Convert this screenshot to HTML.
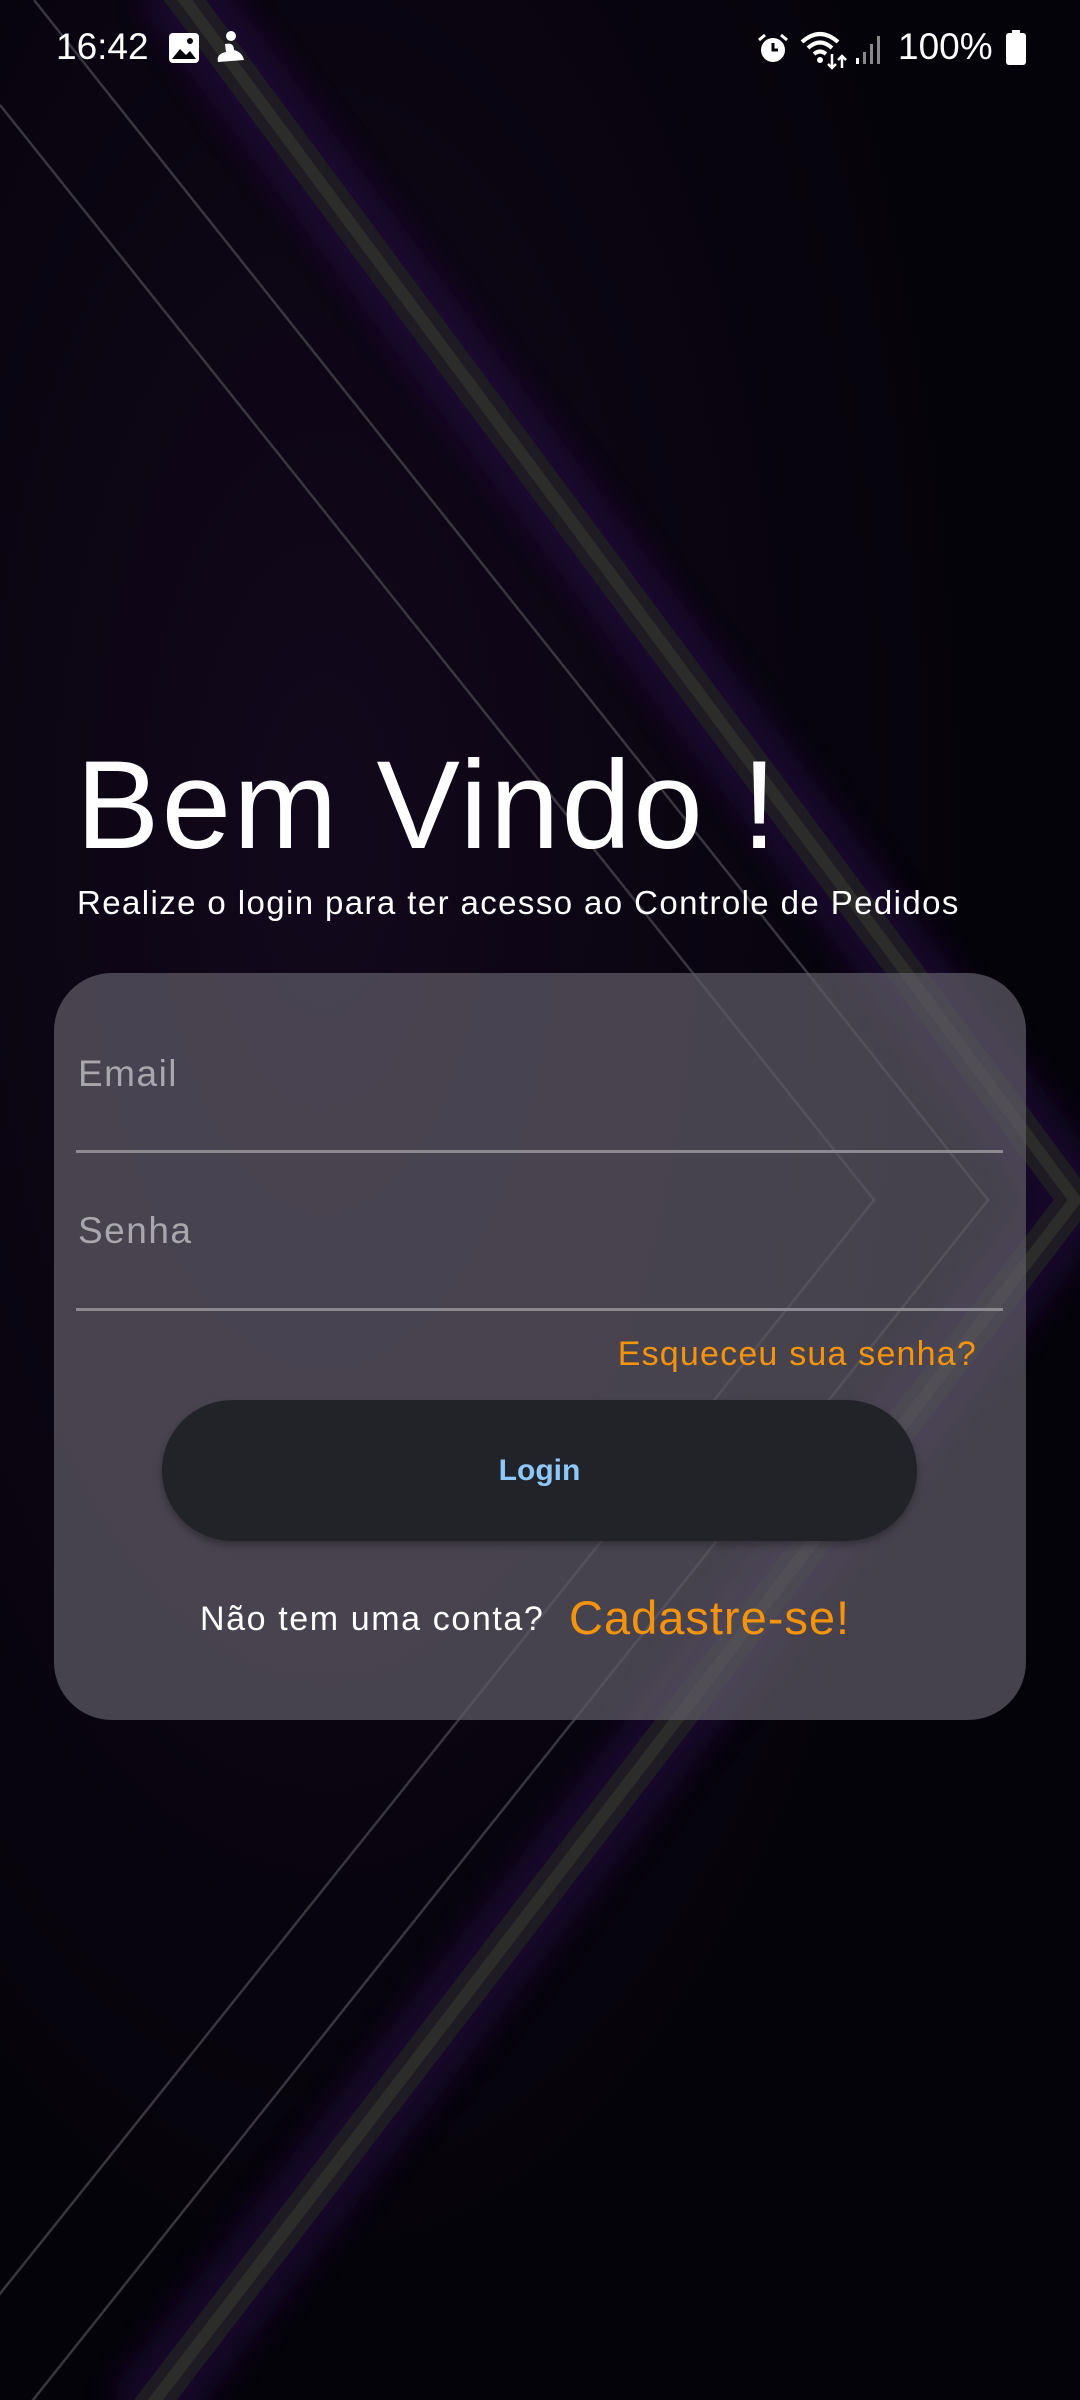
<!DOCTYPE html>
<html><head><meta charset="utf-8"><style>
html,body{margin:0;padding:0;width:1080px;height:2400px;overflow:hidden;background:#06040b;font-family:"Liberation Sans",sans-serif;}
.abs{position:absolute;}
</style></head><body>
<svg class="abs" style="left:0;top:0" width="1080" height="2400" viewBox="0 0 1080 2400">
<defs>
<radialGradient id="g1" cx="0.3" cy="0.35" r="0.6"><stop offset="0" stop-color="#12081c"/><stop offset="1" stop-color="#05030a"/></radialGradient>
<filter id="bl" x="-50%" y="-50%" width="200%" height="200%"><feGaussianBlur stdDeviation="14"/></filter>
</defs>
<rect width="1080" height="2400" fill="url(#g1)"/>
<polyline points="170,-20 1075,1200 140,2420" fill="none" stroke="#2c0850" stroke-width="80" opacity="0.45" filter="url(#bl)"/>
<polyline points="170,-20 1075,1200 140,2420" fill="none" stroke="#1e1c22" stroke-width="34"/>
<polyline points="170,-20 1075,1200 140,2420" fill="none" stroke="#2c2d2a" stroke-width="12"/>
<polyline points="0,105 874,1200 -5,2300" fill="none" stroke="#3a3640" stroke-width="2.5"/>
<polyline points="34,0 988,1200 25,2410" fill="none" stroke="#3a3640" stroke-width="2.5"/>
</svg>
<!-- status bar -->
<div class="abs" style="left:56px;top:26px;color:#fff;font-size:37px;">16:42</div>
<svg class="abs" style="left:168px;top:32px" width="32" height="32" viewBox="0 0 32 32"><rect x="1" y="1" width="30" height="30" rx="4" fill="#fff"/><path d="M4 27 L12 17 L18 23 L22 19 L28 27 Z" fill="#06040b"/><circle cx="22" cy="9" r="3" fill="#06040b"/></svg>
<svg class="abs" style="left:214px;top:30px" width="34" height="36" viewBox="0 0 34 36"><circle cx="17" cy="6" r="5" fill="#fff"/><path d="M11 14 Q20 12 20 20 Q28 22 30 30 L4 32 Q2 24 12 22 Z" fill="#fff"/></svg>
<svg class="abs" style="left:756px;top:32px" width="34" height="34" viewBox="0 0 34 34"><circle cx="17" cy="18" r="12" fill="#fff"/><path d="M17 11 V18 H22" stroke="#06040b" stroke-width="3" fill="none"/><path d="M3 8 L9 3 M31 8 L25 3" stroke="#fff" stroke-width="3"/></svg>
<svg class="abs" style="left:800px;top:30px" width="50" height="40" viewBox="0 0 50 40"><path d="M2 12 Q20 -4 38 12 M8 18 Q20 7 32 18 M14 24 Q20 19 26 24" stroke="#fff" stroke-width="4" fill="none"/><circle cx="20" cy="30" r="3" fill="#fff"/><path d="M32 24 V38 M28 34 L32 38 L36 34 M42 38 V26 M38 30 L42 26 L46 30" stroke="#fff" stroke-width="2.5" fill="none"/></svg>
<svg class="abs" style="left:854px;top:34px" width="30" height="32" viewBox="0 0 30 32"><rect x="2" y="24" width="3" height="6" fill="#fff"/><rect x="9" y="18" width="3" height="12" fill="#888"/><rect x="16" y="10" width="3" height="20" fill="#888"/><rect x="23" y="2" width="3" height="28" fill="#888"/></svg>
<div class="abs" style="left:898px;top:26px;color:#fff;font-size:37px;">100%</div>
<svg class="abs" style="left:1005px;top:30px" width="22" height="36" viewBox="0 0 22 36"><rect x="7" y="0" width="8" height="4" fill="#fff"/><rect x="1" y="3" width="20" height="32" rx="3" fill="#fff"/></svg>
<!-- heading -->
<div class="abs" style="left:76px;top:736px;color:#fff;font-size:125px;letter-spacing:2.2px;line-height:140px;white-space:nowrap;">Bem Vindo !</div>
<div class="abs" style="left:77px;top:884px;color:#fff;font-size:33px;letter-spacing:1.4px;white-space:nowrap;">Realize o login para ter acesso ao Controle de Pedidos</div>
<!-- card -->
<div class="abs" style="left:54px;top:973px;width:972px;height:747px;border-radius:58px;background:rgba(96,92,102,0.72);"></div>
<div class="abs" style="left:78px;top:1053px;color:#a9a7ad;font-size:37px;letter-spacing:1.5px;">Email</div>
<div class="abs" style="left:76px;top:1150px;width:927px;height:3px;background:#8c8a90;"></div>
<div class="abs" style="left:78px;top:1210px;color:#a9a7ad;font-size:37px;letter-spacing:1.5px;">Senha</div>
<div class="abs" style="left:76px;top:1308px;width:927px;height:3px;background:#8c8a90;"></div>
<div class="abs" style="right:103px;top:1335px;color:#f5940c;font-size:34px;letter-spacing:1.2px;white-space:nowrap;">Esqueceu sua senha?</div>
<div class="abs" style="left:162px;top:1400px;width:755px;height:141px;border-radius:71px;background:#212328;box-shadow:0 4px 8px rgba(0,0,0,0.3);display:flex;align-items:center;justify-content:center;color:#8ec8fa;font-size:30px;font-weight:bold;">Login</div>
<div class="abs" style="left:200px;top:1600px;color:#fff;font-size:34px;letter-spacing:1.6px;white-space:nowrap;">Não tem uma conta?</div>
<div class="abs" style="left:569px;top:1590px;color:#f5940c;font-size:47px;letter-spacing:1px;white-space:nowrap;">Cadastre-se!</div>
</body></html>
